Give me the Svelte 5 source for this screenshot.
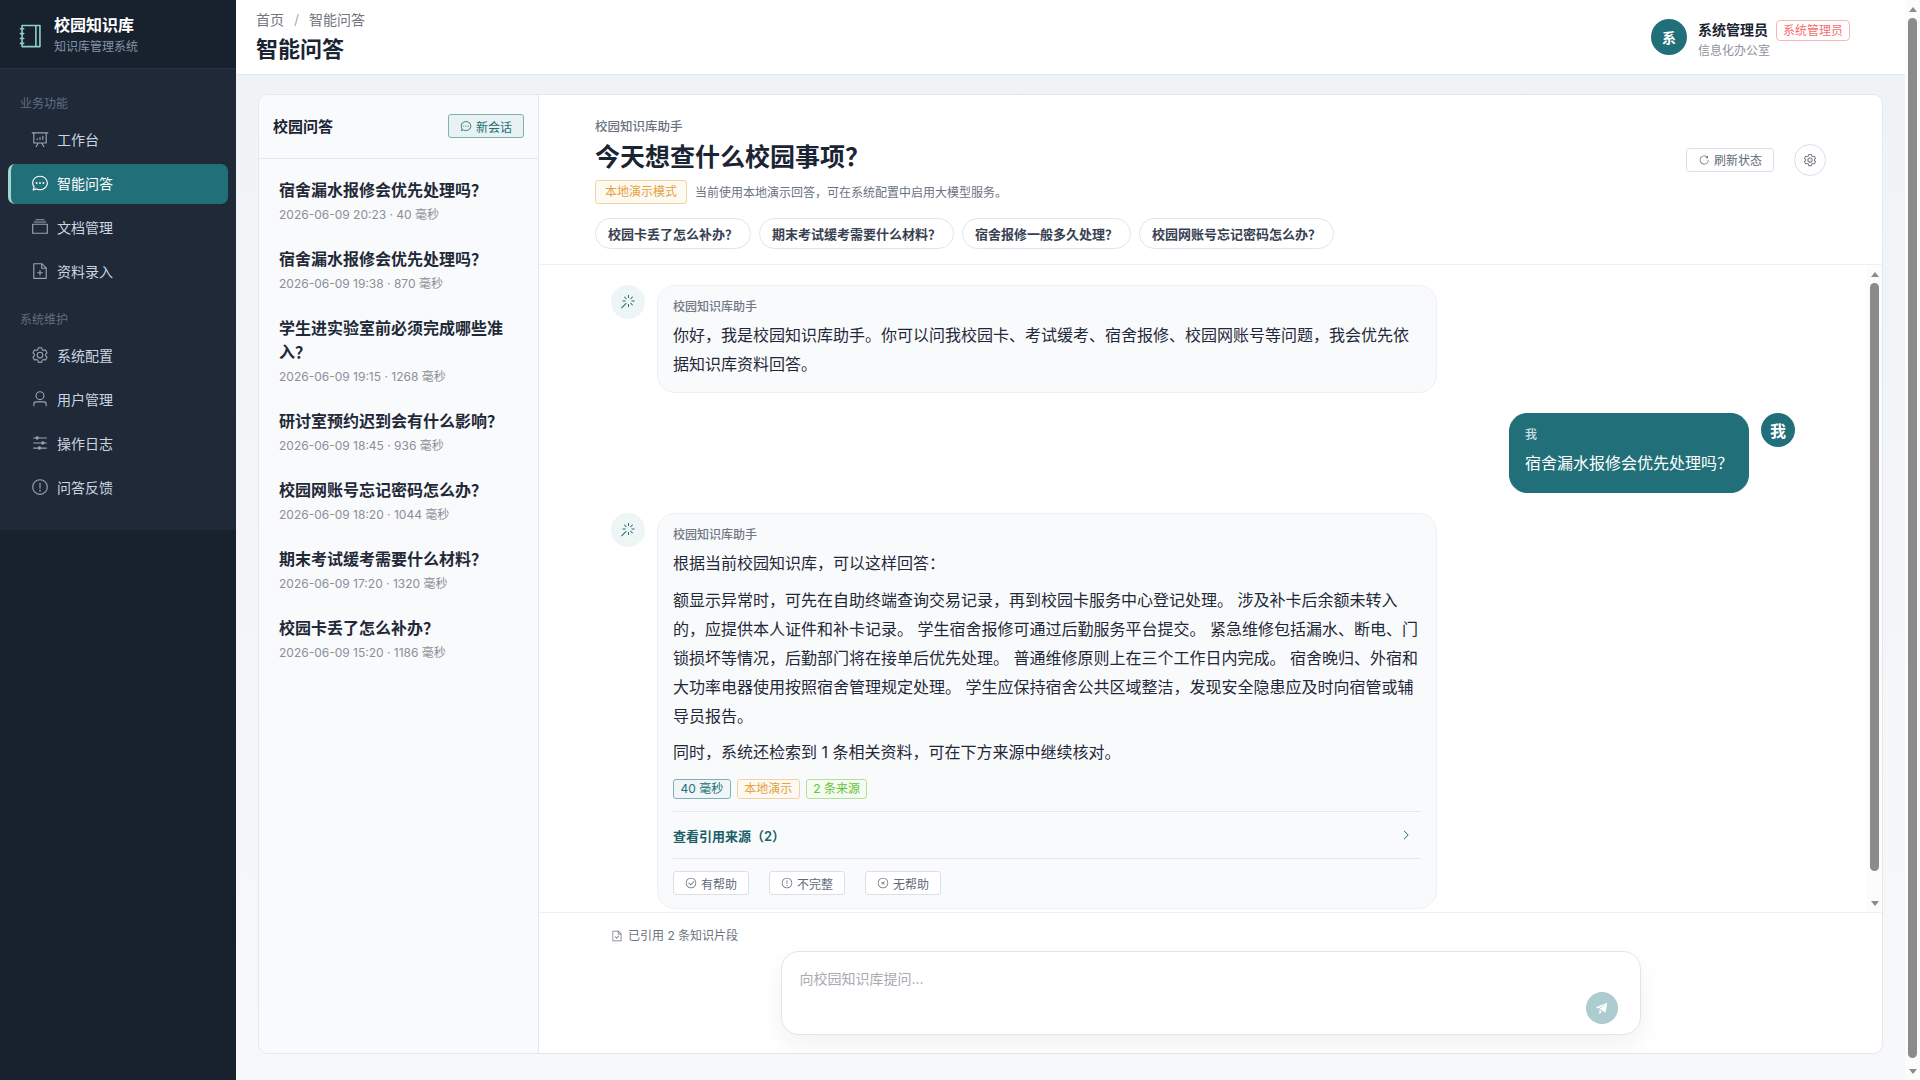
<script>
	const circle = 'M512 896a384 384 0 1 0 0-768 384 384 0 0 0 0 768m0 64a448 448 0 1 1 0-896 448 448 0 0 1 0 896';

	const icons = {
		notebook:
			'M192 128v768h640V128zm-32-64h704a32 32 0 0 1 32 32v832a32 32 0 0 1-32 32H160a32 32 0 0 1-32-32V96a32 32 0 0 1 32-32M672 128h64v768h-64zM96 192h128q32 0 32 32t-32 32H96q-32 0-32-32t32-32m0 192h128q32 0 32 32t-32 32H96q-32 0-32-32t32-32m0 192h128q32 0 32 32t-32 32H96q-32 0-32-32t32-32m0 192h128q32 0 32 32t-32 32H96q-32 0-32-32t32-32',
		board:
			'm665.216 768 110.848 192h-73.856L591.36 768H433.024L322.176 960H248.32l110.848-192H160a32 32 0 0 1-32-32V192H64a32 32 0 0 1 0-64h896a32 32 0 1 1 0 64h-64v544a32 32 0 0 1-32 32zM832 192H192v512h640zM352 448a32 32 0 0 1 32 32v64a32 32 0 0 1-64 0v-64a32 32 0 0 1 32-32m160-64a32 32 0 0 1 32 32v128a32 32 0 0 1-64 0V416a32 32 0 0 1 32-32m160-64a32 32 0 0 1 32 32v192a32 32 0 1 1-64 0V352a32 32 0 0 1 32-32',
		chat: 'm174.72 855.68 135.296-45.12 23.68 11.84C388.096 849.536 448.576 864 512 864c211.84 0 384-166.784 384-352S723.84 160 512 160 128 326.784 128 512c0 69.12 24.96 139.264 70.848 199.232l22.08 28.8-46.272 115.584zm-45.248 82.56A32 32 0 0 1 89.6 896l58.368-145.92C94.72 680.32 64 596.864 64 512 64 299.904 256 96 512 96s448 203.904 448 416-192 416-448 416a461.056 461.056 0 0 1-206.912-48.384l-175.616 58.56zM512 563.2a51.2 51.2 0 1 1 0-102.4 51.2 51.2 0 0 1 0 102.4m192 0a51.2 51.2 0 1 1 0-102.4 51.2 51.2 0 0 1 0 102.4m-384 0a51.2 51.2 0 1 1 0-102.4 51.2 51.2 0 0 1 0 102.4',
		files: 'M128 384v448h768V384zm-32-64h832a32 32 0 0 1 32 32v512a32 32 0 0 1-32 32H96a32 32 0 0 1-32-32V352a32 32 0 0 1 32-32m64-128h704v64H160zm96-128h512v64H256z',
		docadd:
			'M832 384H576V128H192v768h640zm-26.496-64L640 154.496V320zM160 64h480l256 256v608a32 32 0 0 1-32 32H160a32 32 0 0 1-32-32V96a32 32 0 0 1 32-32m320 512V448h64v128h128v64H544v128h-64V640H352v-64z',
		gear: 'M600.704 64a32 32 0 0 1 30.464 22.208l35.2 109.376c14.784 7.232 28.928 15.36 42.432 24.512l112.384-24.192a32 32 0 0 1 34.432 15.36L944.32 364.8a32 32 0 0 1-4.032 37.504l-77.12 85.12a357.12 357.12 0 0 1 0 49.024l77.12 85.248a32 32 0 0 1 4.032 37.504l-88.704 153.6a32 32 0 0 1-34.432 15.296L708.8 803.904c-13.44 9.088-27.648 17.28-42.368 24.512l-35.264 109.376A32 32 0 0 1 600.704 960H423.296a32 32 0 0 1-30.464-22.208L357.696 828.48a351.616 351.616 0 0 1-42.56-24.64l-112.32 24.256a32 32 0 0 1-34.432-15.36L79.68 659.2a32 32 0 0 1 4.032-37.504l77.12-85.248a357.12 357.12 0 0 1 0-48.896l-77.12-85.248A32 32 0 0 1 79.68 364.8l88.704-153.6a32 32 0 0 1 34.432-15.296l112.32 24.256c13.568-9.152 27.776-17.408 42.56-24.64l35.2-109.312A32 32 0 0 1 423.232 64H600.64zm-23.424 64H446.72l-36.352 113.088-24.512 11.968a294.113 294.113 0 0 0-34.816 20.096l-22.656 15.36-116.224-25.088-65.28 113.152 79.68 88.192-1.92 27.136a293.12 293.12 0 0 0 0 40.192l1.92 27.136-79.808 88.192 65.344 113.152 116.224-25.024 22.656 15.296a294.113 294.113 0 0 0 34.816 20.096l24.512 11.968L446.72 896h130.688l36.48-113.152 24.448-11.904a288.282 288.282 0 0 0 34.752-20.096l22.592-15.296 116.288 25.024 65.28-113.152-79.744-88.192 1.92-27.136a293.12 293.12 0 0 0 0-40.256l-1.92-27.136 79.808-88.128-65.344-113.152-116.288 24.96-22.592-15.232a287.616 287.616 0 0 0-34.752-20.096l-24.448-11.904L577.344 128zM512 320a192 192 0 1 1 0 384 192 192 0 0 1 0-384m0 64a128 128 0 1 0 0 256 128 128 0 0 0 0-256',
		user: 'M512 512a192 192 0 1 0 0-384 192 192 0 0 0 0 384m0 64a256 256 0 1 1 0-512 256 256 0 0 1 0 512m320 320v-96a96 96 0 0 0-96-96H288a96 96 0 0 0-96 96v96a32 32 0 1 1-64 0v-96a160 160 0 0 1 160-160h448a160 160 0 0 1 160 160v96a32 32 0 1 1-64 0',
		sliders:
			'M389.44 768a96.064 96.064 0 0 1 181.12 0H896v64H570.56a96.064 96.064 0 0 1-181.12 0H128v-64zm192-288a96.064 96.064 0 0 1 181.12 0H896v64H762.56a96.064 96.064 0 0 1-181.12 0H128v-64zm-320-288a96.064 96.064 0 0 1 181.12 0H896v64H442.56a96.064 96.064 0 0 1-181.12 0H128v-64z',
		warning:
			'M512 64a448 448 0 1 1 0 896 448 448 0 0 1 0-896m0 832a384 384 0 0 0 0-768 384 384 0 0 0 0 768m48-176a48 48 0 1 1-96 0 48 48 0 0 1 96 0m-48-464a32 32 0 0 1 32 32v288a32 32 0 0 1-64 0V288a32 32 0 0 1 32-32',
		check:
			circle +
			'M745.344 361.344a32 32 0 0 1 45.312 45.312l-288 288a32 32 0 0 1-45.312 0l-160-160a32 32 0 1 1 45.312-45.312L480 626.752z',
		close:
			circle +
			'm-45.248-384-90.496-90.496a32 32 0 0 1 45.248-45.248L512 466.752l90.496-90.496a32 32 0 1 1 45.248 45.248L557.248 512l90.496 90.496a32 32 0 1 1-45.248 45.248L512 557.248l-90.496 90.496a32 32 0 0 1-45.248-45.248z',
		refresh:
			'M784.512 230.272v-50.56a32 32 0 1 1 64 0v149.056a32 32 0 0 1-32 32H667.52a32 32 0 1 1 0-64h92.992A320 320 0 1 0 524.8 833.152a320 320 0 0 0 320-320h64a384 384 0 0 1-384 384 384 384 0 0 1-384-384 384 384 0 0 1 643.712-282.88z',
		doccheck:
			'M805.504 320 640 154.496V320zM832 384H576V128H192v768h640zM160 64h480l256 256v608a32 32 0 0 1-32 32H160a32 32 0 0 1-32-32V96a32 32 0 0 1 32-32m318.4 582.144 180.992-180.992L704.64 510.4 478.4 736.64 320 578.304l45.248-45.248z',
		magic:
			'M512 64h64v192h-64zm0 576h64v192h-64zM160 480v-64h192v64zm576 0v-64h192v64zM249.856 199.04l45.248-45.184L430.848 289.6 385.6 334.848 249.856 199.104zM657.152 606.4l45.248-45.248 135.744 135.744-45.248 45.248zM114.048 923.2 68.8 877.952l316.8-316.8 45.248 45.248zM702.4 334.848 657.152 289.6l135.744-135.744 45.248 45.248z',
		arrow:
			'M340.864 149.312a30.592 30.592 0 0 0 0 42.752L652.736 512 340.864 831.936a30.592 30.592 0 0 0 0 42.752 29.12 29.12 0 0 0 41.728 0L714.24 534.336a32 32 0 0 0 0-44.672L382.592 149.376a29.12 29.12 0 0 0-41.728 0z',
		send: 'm64 448 832-320-128 704-446.08-243.328L832 192 242.816 545.472zm256 512V657.024L512 768z'
	};

	const nav = [
		{
			title: '业务功能',
			items: [
				{ label: '工作台', icon: 'board' },
				{ label: '智能问答', icon: 'chat', active: true },
				{ label: '文档管理', icon: 'files' },
				{ label: '资料录入', icon: 'docadd' }
			]
		},
		{
			title: '系统维护',
			items: [
				{ label: '系统配置', icon: 'gear' },
				{ label: '用户管理', icon: 'user' },
				{ label: '操作日志', icon: 'sliders' },
				{ label: '问答反馈', icon: 'warning' }
			]
		}
	];

	const history = [
		{ q: '宿舍漏水报修会优先处理吗？', meta: '2026-06-09 20:23 · 40 毫秒' },
		{ q: '宿舍漏水报修会优先处理吗？', meta: '2026-06-09 19:38 · 870 毫秒' },
		{ q: '学生进实验室前必须完成哪些准入？', meta: '2026-06-09 19:15 · 1268 毫秒' },
		{ q: '研讨室预约迟到会有什么影响？', meta: '2026-06-09 18:45 · 936 毫秒' },
		{ q: '校园网账号忘记密码怎么办？', meta: '2026-06-09 18:20 · 1044 毫秒' },
		{ q: '期末考试缓考需要什么材料？', meta: '2026-06-09 17:20 · 1320 毫秒' },
		{ q: '校园卡丢了怎么补办？', meta: '2026-06-09 15:20 · 1186 毫秒' }
	];

	const chips = ['校园卡丢了怎么补办？', '期末考试缓考需要什么材料？', '宿舍报修一般多久处理？', '校园网账号忘记密码怎么办？'];

	const feedback = [
		{ label: '有帮助', icon: 'check' },
		{ label: '不完整', icon: 'warning' },
		{ label: '无帮助', icon: 'close' }
	];
</script>

{#snippet icon(name, size = 16)}
	<svg class="ic" width={size} height={size} viewBox="0 0 1024 1024"><path fill="currentColor" d={icons[name]} /></svg>
{/snippet}

{#snippet scrollbar(kind)}
	<div class="strip {kind}">
		<span class="up"></span>
		<span class="thumb"></span>
		<span class="down"></span>
	</div>
{/snippet}

<div class="shell">
	<aside class="sidebar">
		<div class="brand">
			<span class="brand-icon">{@render icon('notebook', 26)}</span>
			<div>
				<div class="brand-name">校园知识库</div>
				<div class="brand-sub">知识库管理系统</div>
			</div>
		</div>
		<nav>
			{#each nav as group}
				<div class="nav-title">{group.title}</div>
				{#each group.items as item}
					<div class="nav-item" class:active={item.active}>
						{@render icon(item.icon, 18)}
						<span>{item.label}</span>
					</div>
				{/each}
			{/each}
		</nav>
	</aside>

	<div class="main">
		<div class="page">
			<header class="topbar">
				<div>
					<div class="crumbs">首页<i>/</i>智能问答</div>
					<h1>智能问答</h1>
				</div>
				<div class="account">
					<div class="avatar">系</div>
					<div class="account-text">
						<div class="account-line"><b>系统管理员</b><span class="role">系统管理员</span></div>
						<div class="dept">信息化办公室</div>
					</div>
				</div>
			</header>

			<div class="content">
				<section class="card">
					<div class="history">
						<div class="history-head">
							<strong>校园问答</strong>
							<button class="new-chat">{@render icon('chat', 12)}新会话</button>
						</div>
						<ul>
							{#each history as row}
								<li>
									<div class="q">{row.q}</div>
									<div class="meta">{row.meta}</div>
								</li>
							{/each}
						</ul>
					</div>

					<div class="chat">
						<div class="chat-head">
							<div class="head-row">
								<div>
									<div class="kicker">校园知识库助手</div>
									<h2>今天想查什么校园事项？</h2>
									<div class="mode">
										<span class="mode-tag">本地演示模式</span>
										<span class="mode-note">当前使用本地演示回答，可在系统配置中启用大模型服务。</span>
									</div>
								</div>
								<div class="head-actions">
									<button class="plain">{@render icon('refresh', 12)}刷新状态</button>
									<button class="gear-btn">{@render icon('gear', 14)}</button>
								</div>
							</div>
							<div class="chips">
								{#each chips as chip}
									<button class="chip">{chip}</button>
								{/each}
							</div>
						</div>

						<div class="thread">
							<div class="messages">
								<div class="msg">
									<div class="bot-avatar">{@render icon('magic', 16)}</div>
									<div class="bubble">
										<div class="who">校园知识库助手</div>
										<p>你好，我是校园知识库助手。你可以问我校园卡、考试缓考、宿舍报修、校园网账号等问题，我会优先依据知识库资料回答。</p>
									</div>
								</div>

								<div class="msg mine">
									<div class="bubble">
										<div class="who">我</div>
										<p>宿舍漏水报修会优先处理吗？</p>
									</div>
									<div class="me-avatar">我</div>
								</div>

								<div class="msg">
									<div class="bot-avatar">{@render icon('magic', 16)}</div>
									<div class="bubble">
										<div class="who">校园知识库助手</div>
										<p>根据当前校园知识库，可以这样回答：</p>
										<p class="next">额显示异常时，可先在自助终端查询交易记录，再到校园卡服务中心登记处理。 涉及补卡后余额未转入的，应提供本人证件和补卡记录。 学生宿舍报修可通过后勤服务平台提交。 紧急维修包括漏水、断电、门锁损坏等情况，后勤部门将在接单后优先处理。 普通维修原则上在三个工作日内完成。 宿舍晚归、外宿和大功率电器使用按照宿舍管理规定处理。 学生应保持宿舍公共区域整洁，发现安全隐患应及时向宿管或辅导员报告。</p>
										<p class="next">同时，系统还检索到 1 条相关资料，可在下方来源中继续核对。</p>
										<div class="tags">
											<span class="tag teal">40 毫秒</span>
											<span class="tag orange">本地演示</span>
											<span class="tag green">2 条来源</span>
										</div>
										<div class="sources">
											<span>查看引用来源（2）</span>
											{@render icon('arrow', 12)}
										</div>
										<div class="feedback">
											{#each feedback as f}
												<button class="plain">{@render icon(f.icon, 12)}{f.label}</button>
											{/each}
										</div>
									</div>
								</div>
							</div>
							{@render scrollbar('inner')}
						</div>

						<div class="composer-wrap">
							<div class="cited">{@render icon('doccheck', 12)}已引用 2 条知识片段</div>
							<div class="composer">
								<span class="placeholder">向校园知识库提问...</span>
								<button class="send" aria-label="发送">{@render icon('send', 14)}</button>
							</div>
						</div>
					</div>
				</section>
			</div>
		</div>
		{@render scrollbar('outer')}
	</div>
</div>

<style>
	:global(body) {
		overflow: hidden;
		font-family: Inter, 'Noto Sans CJK SC', sans-serif;
		color: #1f2937;
	}

	button {
		font: inherit;
		cursor: pointer;
	}

	.ic {
		display: block;
		flex: none;
	}

	.shell {
		display: flex;
		height: 100vh;
	}

	/* sidebar */
	.sidebar {
		width: 236px;
		flex: none;
		background: #18222f;
	}

	.brand {
		height: 69px;
		box-sizing: border-box;
		display: flex;
		align-items: center;
		gap: 10px;
		padding: 3px 0 0 18px;
		border-bottom: 1px solid #2a3442;
	}

	.brand-icon {
		color: #8fcdc6;
	}

	.brand-name {
		font-size: 16px;
		font-weight: 700;
		line-height: 22px;
		color: #fff;
	}

	.brand-sub {
		margin-top: 1px;
		font-size: 12px;
		line-height: 20px;
		color: #8494a8;
	}

	nav {
		background: #1f2937;
		height: 461px;
		box-sizing: border-box;
		padding: 24px 8px 0;
	}

	.nav-title {
		font-size: 12px;
		line-height: 22px;
		color: #5f6e83;
		padding-left: 12px;
		margin-bottom: 5px;
	}

	.nav-item + .nav-title {
		margin-top: 17px;
	}

	.nav-item {
		height: 40px;
		margin-bottom: 4px;
		display: flex;
		align-items: center;
		gap: 8px;
		padding: 0 0 2px 23px;
		box-sizing: border-box;
		font-size: 14px;
		color: #cbd5e1;
		border-radius: 7px;
	}

	.nav-item .ic {
		color: #9aa5b4;
	}

	.nav-item.active {
		background: #216f78;
		color: #fff;
		border-left: 3px solid #a3d6cf;
		padding-left: 20px;
	}

	.nav-item.active .ic {
		color: #fff;
	}

	/* main column */
	.main {
		flex: 1;
		min-width: 0;
		display: flex;
		overflow: hidden;
	}

	.page {
		flex: 1;
		min-width: 0;
		background: linear-gradient(180deg, #eff3f6, #f7f8fa);
	}

	/* scrollbars are drawn, the browser hides its own */
	.strip {
		width: 15px;
		flex: none;
		display: flex;
		flex-direction: column;
		align-items: center;
		background: #fcfcfc;
	}

	.up,
	.down {
		flex: none;
		height: 18px;
		display: flex;
		align-items: center;
	}

	.up::before,
	.down::before {
		content: '';
		border-left: 4.5px solid transparent;
		border-right: 4.5px solid transparent;
	}

	.up::before {
		border-bottom: 5px solid #8b8b8b;
	}

	.down::before {
		border-top: 5px solid #8b8b8b;
	}

	.thumb {
		flex: 1;
		width: 9px;
		background: #8b8b8b;
		border-radius: 5px;
	}

	.outer .thumb {
		margin-bottom: 4px;
	}

	.inner .thumb {
		margin-bottom: 23px;
	}

	.topbar {
		height: 75px;
		box-sizing: border-box;
		display: flex;
		align-items: center;
		justify-content: space-between;
		padding: 0 55px 0 20px;
		background: #fff;
		border-bottom: 1px solid #e4e7ed;
	}

	.crumbs {
		font-size: 14px;
		line-height: 20px;
		color: #71767f;
	}

	.crumbs i {
		font-style: normal;
		color: #a8abb2;
		margin: 0 10px;
	}

	h1 {
		margin: 4px 0 0;
		font-size: 22px;
		line-height: 30px;
		font-weight: 700;
		color: #1a2433;
	}

	.account {
		display: flex;
		align-items: center;
		gap: 11px;
	}

	.account-text {
		padding-top: 4px;
	}

	.avatar {
		width: 36px;
		height: 36px;
		border-radius: 50%;
		background: #216f78;
		color: #fff;
		font-size: 14px;
		font-weight: 700;
		display: grid;
		place-items: center;
	}

	.account-line {
		display: flex;
		align-items: flex-start;
		gap: 8px;
		height: 21px;
	}

	.account-line b {
		font-size: 14px;
		line-height: 21px;
		font-weight: 600;
		color: #1a2433;
	}

	.role {
		margin-top: 1px;
		font-size: 12px;
		line-height: 19px;
		color: #f56c6c;
		border: 1px solid #fab6b6;
		border-radius: 4px;
		padding: 0 6px;
	}

	.dept {
		margin-top: 2px;
		font-size: 12px;
		line-height: 18px;
		color: #8d939c;
	}

	.content {
		padding: 19px 22px 0;
	}

	.card {
		height: 960px;
		box-sizing: border-box;
		display: flex;
		background: #fff;
		border: 1px solid #e4e7ed;
		border-radius: 10px;
		overflow: hidden;
	}

	/* question history */
	.history {
		width: 280px;
		flex: none;
		background: #f9fafc;
		border-right: 1px solid #e4e7ed;
		box-sizing: border-box;
	}

	.history-head {
		height: 64px;
		box-sizing: border-box;
		display: flex;
		align-items: center;
		justify-content: space-between;
		padding: 0 14px 1px;
		border-bottom: 1px solid #e4e7ed;
	}

	.history-head strong {
		margin-top: -2px;
		font-size: 15px;
		font-weight: 600;
		color: #1a2433;
	}

	.new-chat {
		width: 76px;
		height: 24px;
		padding: 0;
		display: flex;
		align-items: center;
		justify-content: center;
		gap: 4px;
		font-size: 12px;
		color: #216f78;
		background: #e9f1f2;
		border: 1px solid #7fb0b5;
		border-radius: 3px;
	}

	ul {
		list-style: none;
		margin: 0;
		padding: 9px 0 0;
	}

	li {
		padding: 10px 16px 12.5px 20px;
	}

	.q {
		font-size: 16px;
		line-height: 24px;
		font-weight: 600;
		color: #1f2937;
	}

	.meta {
		margin-top: 2.5px;
		font-size: 12px;
		line-height: 20px;
		color: #8a8f98;
	}

	/* chat panel */
	.chat {
		flex: 1;
		min-width: 0;
		display: flex;
		flex-direction: column;
	}

	.chat-head {
		height: 170px;
		flex: none;
		box-sizing: border-box;
		padding: 22px 56px 0;
		border-bottom: 1px solid #eef0f4;
	}

	.head-row {
		display: flex;
		align-items: center;
		justify-content: space-between;
	}

	.kicker {
		font-size: 12.5px;
		line-height: 20px;
		font-weight: 500;
		color: #6b7280;
	}

	h2 {
		margin: 3px 0 6px;
		font-size: 25px;
		line-height: 34px;
		font-weight: 700;
		color: #1a2433;
	}

	.mode {
		display: flex;
		align-items: center;
		gap: 8px;
		font-size: 12px;
		color: #6b7280;
	}

	.mode-note {
		margin-top: -2px;
	}

	.mode-tag {
		height: 24px;
		box-sizing: border-box;
		line-height: 22px;
		padding: 0 9px;
		color: #e6a23c;
		background: #fdfaf4;
		border: 1px solid #f5d19e;
		border-radius: 3px;
	}

	.head-actions {
		display: flex;
		align-items: center;
		gap: 20px;
		margin-bottom: 2px;
	}

	.plain {
		height: 24px;
		width: 76px;
		padding: 0;
		display: flex;
		align-items: center;
		justify-content: center;
		gap: 4px;
		font-size: 12px;
		color: #606a78;
		background: #fff;
		border: 1px solid #dcdfe6;
		border-radius: 3px;
	}

	.head-actions .plain {
		width: 88px;
	}

	.gear-btn {
		width: 32px;
		height: 32px;
		padding: 0;
		display: grid;
		place-items: center;
		color: #606a78;
		background: #fff;
		border: 1px solid #dcdfe6;
		border-radius: 50%;
	}

	.chips {
		display: flex;
		gap: 8px;
		margin-top: 14px;
	}

	.chip {
		height: 31px;
		padding: 0 12px;
		font-size: 13px;
		font-weight: 600;
		color: #374151;
		background: #fff;
		border: 1px solid #dfe5ee;
		border-radius: 16px;
	}

	.thread {
		flex: 1;
		min-height: 0;
		display: flex;
	}

	.messages {
		flex: 1;
		min-width: 0;
		overflow: hidden;
		padding: 20px 72px 0;
		display: flex;
		flex-direction: column;
		gap: 20px;
	}

	.msg {
		display: flex;
		flex: none;
		align-items: flex-start;
		gap: 12px;
	}

	.msg.mine {
		justify-content: flex-end;
	}

	.bot-avatar,
	.me-avatar {
		width: 34px;
		height: 34px;
		flex: none;
		border-radius: 50%;
		display: grid;
		place-items: center;
	}

	.bot-avatar {
		background: #edf6f5;
		color: #216f78;
	}

	.me-avatar {
		background: #216f78;
		color: #fff;
		font-size: 16px;
		font-weight: 700;
	}

	.bubble {
		box-sizing: border-box;
		padding: 12px 15px 13px;
		background: #f9fafc;
		border: 1px solid #eef0f4;
		border-radius: 18px;
	}

	.msg:not(.mine) .bubble {
		width: 780px;
	}

	.mine .bubble {
		background: #216f78;
		border-color: #216f78;
		color: #fff;
		padding-bottom: 14px;
	}

	.who {
		font-size: 12px;
		line-height: 18px;
		font-weight: 500;
		color: #707885;
		margin-bottom: 5px;
	}

	.mine .who {
		color: #cfe0e2;
	}

	.bubble p {
		margin: 0;
		font-size: 16px;
		line-height: 29px;
	}

	.bubble p.next {
		margin-top: 7.5px;
	}

	.tags {
		display: flex;
		gap: 6px;
		margin-top: 12px;
	}

	.tag {
		height: 20px;
		box-sizing: border-box;
		line-height: 18px;
		padding: 0 6.5px;
		font-size: 12px;
		border: 1px solid;
		border-radius: 3px;
	}

	.tag.teal {
		color: #216f78;
		border-color: #7fb0b5;
		background: #f0f6f7;
	}

	.tag.orange {
		color: #e6a23c;
		border-color: #f5d19e;
		background: #fdfaf4;
	}

	.tag.green {
		color: #67c23a;
		border-color: #b3e19d;
		background: #f4fbf0;
	}

	.sources {
		height: 48px;
		margin-top: 12px;
		box-sizing: border-box;
		display: flex;
		align-items: center;
		justify-content: space-between;
		padding-right: 9px;
		font-size: 13px;
		font-weight: 600;
		color: #1b5f67;
		border-top: 1px solid #e4e7ed;
		border-bottom: 1px solid #e4e7ed;
	}

	.feedback {
		display: flex;
		gap: 20px;
		margin-top: 12px;
	}

	.composer-wrap {
		height: 141px;
		flex: none;
		box-sizing: border-box;
		padding: 13px 72px 0;
		border-top: 1px solid #eef0f4;
	}

	.cited {
		display: flex;
		align-items: center;
		gap: 5px;
		font-size: 12px;
		line-height: 20px;
		color: #6b7280;
	}

	.composer {
		position: relative;
		box-sizing: border-box;
		width: 860px;
		height: 84px;
		margin: 5px auto 0;
		background: #fff;
		border: 1px solid #e0e5ec;
		border-radius: 18px;
		box-shadow: 0 10px 24px rgba(31, 41, 55, 0.06);
		padding: 16px 18px;
	}

	.placeholder {
		font-size: 14px;
		line-height: 22px;
		color: #a8abb2;
	}

	.send {
		position: absolute;
		right: 22px;
		bottom: 10px;
		width: 32px;
		height: 32px;
		padding: 0;
		border: 0;
		border-radius: 50%;
		background: #acccd0;
		color: #fff;
		display: grid;
		place-items: center;
	}
</style>
